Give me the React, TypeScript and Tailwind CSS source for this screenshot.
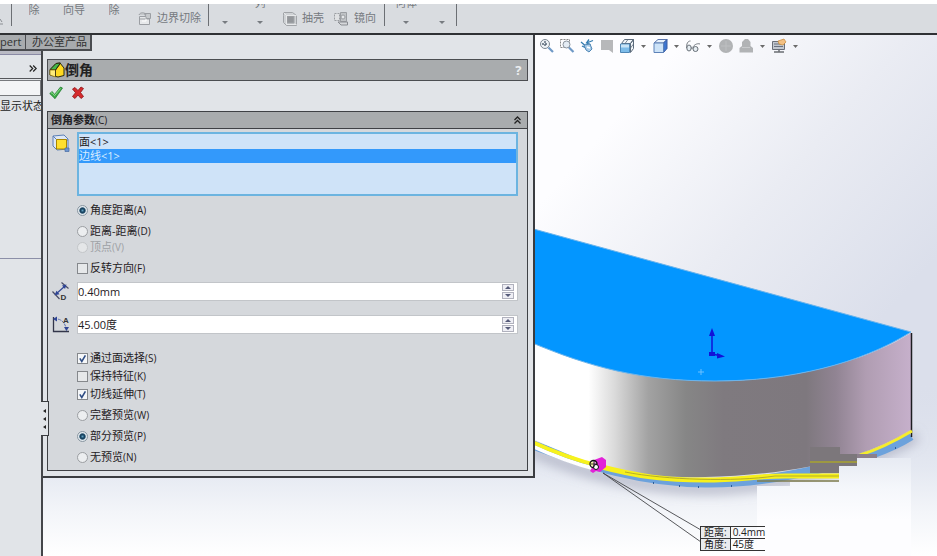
import React from 'react';

const CaretDown: React.FC = () => (
  <svg width="6" height="3" viewBox="0 0 6 3" aria-hidden="true">
    <path d="M0 0h6L3 3z" fill="#777b80" />
  </svg>
);

const Radio: React.FC<{ name: string; label: string; hotkey: string; checked?: boolean; disabled?: boolean }> = ({
  name,
  label,
  hotkey,
  checked,
  disabled,
}) => (
  <label className={`flex h-4 items-center gap-0.5 ${disabled ? 'text-[#9ea1a5]' : ''}`}>
    <input
      type="radio"
      name={name}
      defaultChecked={checked}
      disabled={disabled}
      className="size-[11px] appearance-none rounded-full border border-[#9b9ea2] bg-[#eceef0] checked:border-[#8795a0] checked:bg-[radial-gradient(circle,#5f9fc0_0,#153f5c_30%,#1d4a68_42%,#e4eaef_58%)] disabled:border-[#c3c6c9] disabled:bg-[#e4e6e8]"
    />
    <span className="whitespace-nowrap">
      {label}
      <span className="text-[10px]">({hotkey})</span>
    </span>
  </label>
);

const Check: React.FC<{ label: string; hotkey: string; checked?: boolean }> = ({ label, hotkey, checked }) => (
  <label className="flex h-4 items-center gap-0.5">
    <span className="grid size-[11px]">
      <input
        type="checkbox"
        defaultChecked={checked}
        className="peer col-start-1 row-start-1 size-[11px] appearance-none border border-[#85888c] bg-[#e6e8ea] checked:bg-[#f5f7f9]"
      />
      <svg
        viewBox="0 0 11 11"
        className="pointer-events-none invisible col-start-1 row-start-1 size-[11px] peer-checked:visible"
        aria-hidden="true"
      >
        <path d="M2.8 5.4l2 3L8.4 2.4" fill="none" stroke="#2f4d84" strokeWidth="1.6" />
      </svg>
    </span>
    <span className="whitespace-nowrap">
      {label}
      <span className="text-[10px]">({hotkey})</span>
    </span>
  </label>
);

const Spinner: React.FC<{ label: string; value: string; icon: React.ReactNode }> = ({ label, value, icon }) => (
  <div className="flex">
    <span className="w-[29px] shrink-0 pl-1">{icon}</span>
    <div className="flex h-[19px] flex-1 border border-[#c2c5c9] bg-white">
      <input
        type="text"
        aria-label={label}
        defaultValue={value}
        className="min-w-0 flex-1 bg-transparent text-[11px] leading-4 outline-none"
      />
      <div className="flex w-[15px] flex-col justify-center gap-px">
        <button type="button" aria-label={`${label} +`} className="flex h-[7px] w-3 items-center justify-center border border-[#b0b1bd] bg-[#eeeef4]">
          <svg width="6" height="3" viewBox="0 0 6 3"><path d="M3 0l3 3H0z" fill="#555a78" /></svg>
        </button>
        <button type="button" aria-label={`${label} -`} className="flex h-[7px] w-3 items-center justify-center border border-[#b0b1bd] bg-[#eeeef4]">
          <svg width="6" height="3" viewBox="0 0 6 3"><path d="M0 0h6L3 3z" fill="#555a78" /></svg>
        </button>
      </div>
    </div>
  </div>
);

/* Ribbon column with a label that is cut off by the top edge */
const RibbonColumn: React.FC<{ label?: string; arrow?: boolean; low?: boolean; className: string }> = ({
  label,
  arrow,
  low,
  className,
}) => (
  <button type="button" aria-label={label || 'more'} className={`flex h-[22px] flex-col items-center justify-between ${className}`}>
    <span className={`flex items-end overflow-hidden leading-3 ${low ? 'h-[5px]' : 'h-3'}`}>{label}</span>
    {arrow && <span className="flex h-2 items-center"><CaretDown /></span>}
  </button>
);

const Toolbar: React.FC = () => (
  <header className="mt-1 flex h-[31px] overflow-hidden border-b-2 border-[#2f3134] bg-[#d9dce0] text-[11px] text-[#75797e]">
    <div className="flex h-[22px] w-3 shrink-0 items-end border-r border-[#6c6f74]">
      <svg width="5" height="8" viewBox="0 0 5 8"><path d="M0 1l2 3M0 6h3" stroke="#8a8e93" fill="none" /></svg>
    </div>
    <RibbonColumn label="除" className="w-11 shrink-0" />
    <RibbonColumn label="向导" className="w-9 shrink-0" />
    <RibbonColumn label="除" className="w-11 shrink-0" />
    <button type="button" className="flex h-[22px] shrink-0 items-end gap-[5px] border-r border-[#6c6f74] pr-[7px] pl-0.5 leading-4">
      <svg width="14" height="15" viewBox="0 0 14 15" fill="none" stroke="#9b9ea3">
        <path d="M1.5 5.500h10v8h-10zM1.500 8h10" fill="#e6e8ea" />
        <path d="M1 4c1-3 6-3 7 0M6.500 2.500h6v5h-4z" fill="#c6c9cc" />
        <path d="M4 10h4v-2" stroke="#fff" />
      </svg>
      边界切除
    </button>
    <RibbonColumn arrow className="w-8 shrink-0" />
    <RibbonColumn label="列" arrow low className="w-[38px] shrink-0" />
    <button type="button" className="flex h-[22px] shrink-0 items-end gap-[5px] pr-1.5 pl-1 leading-4">
      <svg width="14" height="14" viewBox="0 0 14 14" fill="none" stroke="#a1a4a8">
        <path d="M.5 3.500v-3h9l4 3v10h-10l-3-3z" fill="#cfd2d5" />
        <path d="M4 4h7v7H4z" fill="#94979b" />
        <path d="M.5.500l3 3v9h10M3.500 3.500h10" stroke="#e6e8ea" />
      </svg>
      抽壳
    </button>
    <button type="button" className="flex h-[22px] shrink-0 items-end gap-1.5 border-r border-[#6c6f74] pr-2 pl-1 leading-4">
      <svg width="14" height="14" viewBox="0 0 14 14" fill="none" stroke="#9b9ea2">
        <path d="M.5 1.500h5v7h-5z" fill="#dfe1e3" strokeDasharray="2 1" />
        <path d="M6.500.500h6v9h-6z" fill="#c0c3c6" />
        <circle cx="9" cy="5" r="2" fill="#e6e8ea" />
        <path d="M4 10l3 3h6.500v-3z" fill="#d5d7da" stroke="#888b90" />
      </svg>
      镜向
    </button>
    <RibbonColumn label="何体" arrow low className="w-[42px] shrink-0" />
    <RibbonColumn arrow className="w-[30px] shrink-0 border-r border-[#6c6f74]" />
  </header>
);

const FaceIcon: React.FC = () => (
  <svg width="18" height="18" viewBox="0 0 18 18">
    <path d="M1 2l11-1 4 4v10l-11 1-4-4z" fill="#dfe8f4" stroke="#5a7fb8" />
    <path d="M1 2l4 4h11M5 6v9" stroke="#5a7fb8" fill="none" />
    <path d="M4.500 5.500h10v9.500h-10z" fill="#ffe02e" stroke="#a98700" />
    <path d="M13 14h4v3.500h-4z" fill="#6f97d0" stroke="#466ba4" strokeWidth=".7" />
  </svg>
);

const DistanceIcon: React.FC = () => (
  <svg width="18" height="19" viewBox="0 0 18 19" fill="none">
    <path d="M9.500.500l7 6M.5 9.500l7 7.500" stroke="#4a4d66" strokeWidth="1.200" />
    <path d="M4 12l9-8" stroke="#2f4596" strokeWidth="1.200" />
    <path d="M2.500 13.300l2-4.500 3 3.500zM14.500 2.500l-4.500 1 3 3.500z" fill="#2f4596" />
    <text x="8.500" y="18" fontSize="8" fontWeight="bold" fontFamily="Liberation Sans, sans-serif" fill="#333">D</text>
  </svg>
);

const AngleIcon: React.FC = () => (
  <svg width="18" height="19" viewBox="0 0 18 19" fill="none">
    <path d="M1.500 2v14.500H17" stroke="#33364a" strokeWidth="1.300" />
    <path d="M2 4c7-1 12 4 12.500 12" stroke="#5b6fb0" strokeDasharray="3 1" />
    <path d="M1 4l4-2.500v5zM14.500 16l-2.500-4h5z" fill="#2f4596" />
    <text x="11" y="8" fontSize="8" fontWeight="bold" fontFamily="Liberation Sans, sans-serif" fill="#333">A</text>
  </svg>
);

const ChamferPanel: React.FC = () => (
  <form className="relative min-w-0 flex-1 self-start border-r-2 border-b-2 border-[#3a3c40] bg-[#e1e4e8] pt-2 pr-[5px] pb-[5px] pl-1">
    <div className="flex h-[22px] items-center border border-[#4b4d51] bg-[#a9acae] pr-1.5 pl-px">
      <svg width="16" height="16" viewBox="0 0 16 16" stroke="#2b2a10" strokeLinejoin="round">
        <path d="M1 8l6-6.500 4-.5 4 5v7.500l-6 1.500-8-2z" fill="#ffd91f" />
        <path d="M1 7.500L7 1.500l4.500-.5L6.500 8z" fill="#43b749" />
        <path d="M1 8l5.500 0v7L1 13z" fill="#ffec7a" stroke="#8b7310" strokeWidth=".7" />
        <path d="M11.500 1L6.500 8v6.500" fill="none" strokeWidth=".8" />
      </svg>
      <h1 className="flex-1 text-[14px] leading-5 font-bold text-[#222]">倒角</h1>
      <button type="button" aria-label="help" className="text-[13px] leading-4 font-bold text-[#eceef0]">?</button>
    </div>

    <div className="flex h-[30px] items-start gap-2 pt-[5px] pl-0.5">
      <button type="button" aria-label="OK">
        <svg width="14" height="14" viewBox="0 0 14 14">
          <path d="M.7 7.500l2.500-2 2.300 3L11.500 1l2 1L6 12.700z" fill="#39a945" stroke="#1d7a2c" strokeWidth=".7" />
          <path d="M2 7.300l1-.7 2.500 3L11.500 2.500" fill="none" stroke="#8fdc8c" />
        </svg>
      </button>
      <button type="button" aria-label="Cancel">
        <svg width="14" height="14" viewBox="0 0 14 14">
          <path d="M1.500 3l2.500-1.500 3 3 3-3.500 2.500 1.500-3 4 3 4-2.500 2-3-3.500-3 3.500-2.500-2 3-3.800z" fill="#d52a2c" stroke="#8d1215" strokeWidth=".8" />
        </svg>
      </button>
    </div>

    <fieldset className="border border-[#3f4145] bg-[#d5d8dc] text-[11px] text-[#1f2023]">
      <div className="flex h-[17px] items-center justify-between border-b border-[#3f4145] bg-[#a9acae] pr-1.5 pl-[3px]">
        <h2 className="leading-4 font-bold">倒角参数<span className="text-[10px] font-normal">(C)</span></h2>
        <button type="button" aria-label="collapse">
          <svg width="7" height="8" viewBox="0 0 7 8" fill="none" stroke="#222" strokeWidth="1.300">
            <path d="M.5 4l3-3 3 3M.5 7.500l3-3 3 3" />
          </svg>
        </button>
      </div>

      <div className="pt-[3px] pr-[9px] pb-[5px]">
        <div className="flex">
          <span className="w-[29px] shrink-0 pt-0.5 pl-1"><FaceIcon /></span>
          <ul role="listbox" aria-label="倒角参数" className="h-16 flex-1 border-2 border-[#6cb4e0] bg-[#cfe3f8] pt-px">
            <li role="option" aria-selected="false" className="leading-[14px]">面&lt;1&gt;</li>
            <li role="option" aria-selected="true" className="bg-[#3399fb] leading-[14px] text-[#d8ecff]">边线&lt;1&gt;</li>
          </ul>
        </div>

        <div className="pt-1.5 pl-[29px]">
          <div className="pb-[5px]"><Radio name="type" label="角度距离" hotkey="A" checked /></div>
          <Radio name="type" label="距离-距离" hotkey="D" />
          <Radio name="type" label="顶点" hotkey="V" disabled />
          <div className="pt-[5px]"><Check label="反转方向" hotkey="F" /></div>
        </div>

        <div className="flex flex-col gap-3.5 pt-1.5">
          <Spinner label="距离" value="0.40mm" icon={<DistanceIcon />} />
          <Spinner label="角度" value="45.00度" icon={<AngleIcon />} />
        </div>

        <div className="flex flex-col gap-0.5 pt-4 pl-[29px]">
          <Check label="通过面选择" hotkey="S" checked />
          <Check label="保持特征" hotkey="K" />
          <Check label="切线延伸" hotkey="T" checked />
        </div>
        <div className="flex flex-col gap-[5px] pt-[5px] pl-[29px]">
          <Radio name="preview" label="完整预览" hotkey="W" />
          <Radio name="preview" label="部分预览" hotkey="P" checked />
          <Radio name="preview" label="无预览" hotkey="N" />
        </div>
      </div>
    </fieldset>

    {/* Splitter handle sits over the panel edge */}
    <button
      type="button"
      aria-label="splitter"
      className="absolute top-[350px] -left-0.5 flex h-[35px] w-2 flex-col items-center justify-center gap-1 border-y border-r border-[#3a3c40] bg-[#e1e4e8]"
    >
      {[0, 1, 2].map((i) => (
        <svg key={i} width="3" height="4" viewBox="0 0 3 4"><path d="M3 0v4L0 2z" fill="#222" /></svg>
      ))}
    </button>
  </form>
);

const Sidebar: React.FC = () => (
  <aside className="flex w-[43px] shrink-0 flex-col border-r-2 border-[#44464a] bg-[#e1e4e8] text-[11px] text-[#222]">
    <div className="h-1 border-b border-[#8a8aa5] bg-[#b9bac4]" />
    <button type="button" aria-label="expand" className="flex h-6 items-center justify-end border-b border-[#55575b] pt-1 pr-1">
      <svg width="8" height="7" viewBox="0 0 8 7" fill="none" stroke="#222" strokeWidth="1.200">
        <path d="M.7.500l3 3-3 3M4.200.500l3 3-3 3" />
      </svg>
    </button>
    <input type="text" aria-label="filter" className="mt-px h-4 w-full border border-l-0 border-[#77797d] bg-[#f3f4f6]" />
    <span className="mt-0.5 overflow-hidden leading-4 whitespace-nowrap">显示状态</span>
    <div className="h-[145px] shrink-0 border-b border-[#8c8fa8]" />
  </aside>
);

const Arrow: React.FC = () => (
  <button type="button" aria-label="options" className="flex w-[13px] items-center justify-center">
    <svg width="5" height="3" viewBox="0 0 5 3"><path d="M0 0h5L2.500 3z" fill="#6a6a6a" /></svg>
  </button>
);

const ViewIcon: React.FC<{ label: string; children: React.ReactNode }> = ({ label, children }) => (
  <button type="button" aria-label={label} className="flex w-5 items-center justify-center">
    <svg width="16" height="16" viewBox="0 0 16 16" fill="none">{children}</svg>
  </button>
);

const ViewToolbar: React.FC = () => (
  <div className="flex pt-[3px] pl-0.5">
    <div className="flex h-4">
      <ViewIcon label="zoom to fit">
        <circle cx="6" cy="6" r="4.500" fill="#eef2f6" stroke="#7c8792" />
        <path d="M6 3v6M3 6h6" stroke="#566575" strokeWidth="1.400" strokeDasharray="2 1" />
        <path d="M9.500 9.500l4.500 4.500" stroke="#6f99c6" strokeWidth="2.200" />
      </ViewIcon>
      <ViewIcon label="zoom to area">
        <path d="M1.500 1.500h9v8h-9z" stroke="#888" strokeDasharray="2 1" />
        <circle cx="7.500" cy="6.500" r="3.500" fill="#e4ecf4" stroke="#8a939d" />
        <path d="M10 9.500l4.500 4.500" stroke="#6f99c6" strokeWidth="2.200" />
      </ViewIcon>
      <ViewIcon label="previous view">
        <path d="M2 4l7 6M3 8l8 4" stroke="#347cb0" strokeWidth="1.300" />
        <path d="M7.500 5l6.500-2.500M10 1.500L7.500 5l4 1.500" stroke="#347cb0" strokeWidth="1.300" />
        <path d="M5 7l6-1 2 5-3 3-3-2z" fill="#a9cbe8" stroke="#5087b5" />
        <path d="M8 9l3 1" stroke="#fff" strokeWidth="1.500" />
      </ViewIcon>
      <ViewIcon label="section view">
        <path d="M2 2h12v13l-4-3H2z" fill="#b7b8ba" />
      </ViewIcon>
      <ViewIcon label="view orientation">
        <path d="M5.500 1.500h9l-3 4h-9zM11.500 5.500l3-4v9l-3 4z" fill="#f2f6fa" stroke="#5c6b7b" />
        <path d="M1.500 6h9v8.500h-9z" fill="#7dbce9" stroke="#4f87b6" />
        <path d="M9 1.500L6 5.500M11.500 10l3-4" stroke="#5c6b7b" strokeWidth=".8" />
        <path d="M2 6.500h8v3H2z" fill="#c9e4f7" />
      </ViewIcon>
      <Arrow />
      <ViewIcon label="display style">
        <path d="M2 5l4-3.500h9L11.500 5z" fill="#e8f2fc" stroke="#5b76ac" />
        <path d="M11.500 5L15 1.500v9L11.500 14.500z" fill="#3d76d0" stroke="#3a5ca4" />
        <path d="M2 5h9.500v9.500H2z" fill="#cde3f8" stroke="#5d82b8" />
      </ViewIcon>
      <Arrow />
      <ViewIcon label="hide/show items">
        <path d="M1.500 10c0-4 1-7 4-7M8 9c1-2 4-4 7-3" stroke="#777d84" />
        <ellipse cx="4" cy="10" rx="2.200" ry="3" fill="#e6edf2" stroke="#666e76" />
        <ellipse cx="10.500" cy="11" rx="2.500" ry="2.500" fill="#e6edf2" stroke="#666e76" />
        <path d="M6 10l2 0" stroke="#666e76" />
      </ViewIcon>
      <Arrow />
      <ViewIcon label="edit appearance">
        <circle cx="8" cy="8" r="7" fill="#b1b3b5" />
        <path d="M8 3v10M3 8h10" stroke="#bdbfc1" />
      </ViewIcon>
      <ViewIcon label="apply scene">
        <path d="M1.500 14.500V10L4 8V4l3-3h3l2.500 3v4l2.500 2v4.500z" fill="#b1b3b5" />
        <path d="M4 9.500h8" stroke="#c8cacc" />
      </ViewIcon>
      <Arrow />
      <ViewIcon label="view settings">
        <path d="M1.500 3.500h12v8h-12z" fill="#c3c8d0" stroke="#6a6f78" />
        <path d="M3 6h7M3 8.500h9" stroke="#6a7280" />
        <path d="M7 3l6-2 2 3-3 3-4-1z" fill="#f3c083" stroke="#c68836" strokeWidth=".7" />
        <path d="M3 14h10M8 12v2" stroke="#6a6d73" strokeWidth="1.500" />
      </ViewIcon>
      <Arrow />
    </div>
  </div>
);

/* 3D model view, drawn behind the panels */
const Model: React.FC = () => (
  <svg
    className="absolute inset-0 -z-10 h-full w-full"
    viewBox="0 35 937 521"
    preserveAspectRatio="xMinYMin slice"
    fill="none"
    aria-hidden="true"
  >
    <defs>
      <linearGradient id="sky" gradientUnits="userSpaceOnUse" x1="640" y1="90" x2="890" y2="310">
        <stop offset="0" stopColor="#fdfdff" />
        <stop offset=".5" stopColor="#eaecf3" />
        <stop offset="1" stopColor="#dbdfeb" />
      </linearGradient>
      <linearGradient id="ground" gradientUnits="userSpaceOnUse" x1="0" y1="380" x2="0" y2="556">
        <stop offset="0" stopColor="#dbdfeb" stopOpacity="0" />
        <stop offset=".5" stopColor="#e4e8f1" />
        <stop offset=".75" stopColor="#f3f5f9" />
        <stop offset="1" stopColor="#fff" />
      </linearGradient>
      <linearGradient id="wall" gradientUnits="userSpaceOnUse" x1="536" y1="0" x2="911" y2="0">
        <stop offset="0" stopColor="#fff" />
        <stop offset=".14" stopColor="#fff" />
        <stop offset=".21" stopColor="#dadada" />
        <stop offset=".3" stopColor="#a2a2a2" />
        <stop offset=".4" stopColor="#868686" />
        <stop offset=".5" stopColor="#7f7a7f" />
        <stop offset=".72" stopColor="#7e787e" />
        <stop offset=".8" stopColor="#918493" />
        <stop offset=".88" stopColor="#b09db2" />
        <stop offset="1" stopColor="#c6b0cb" />
      </linearGradient>
      <linearGradient id="patch" gradientUnits="userSpaceOnUse" x1="0" y1="458" x2="0" y2="520">
        <stop offset="0" stopColor="#e7ebf3" />
        <stop offset=".5" stopColor="#f5f7fb" />
        <stop offset="1" stopColor="#fdfdff" />
      </linearGradient>
      <filter id="soft" x="-10%" y="-50%" width="120%" height="200%">
        <feGaussianBlur stdDeviation="6" />
      </filter>
    </defs>
    <rect y="35" width="937" height="521" fill="url(#sky)" />
    <rect y="380" width="937" height="176" fill="url(#ground)" />
    <path d="M530 450C590 477 645 488 705 489S870 465 916 436" stroke="#8f93a8" strokeOpacity=".6" strokeWidth="10" filter="url(#soft)" />

    <path d="M530 444C590 466 640 482 705 483S870 462 911 436" stroke="#6ca2dc" strokeWidth="9" />
    <path d="M530 342C590 367 645 381 715 381S860 365 911 333V430C870 456 800 475 705 477S590 463 530 438z" fill="url(#wall)" />
    <path d="M530 228L911 332C860 364 790 381 715 381S590 367 530 342z" fill="#0396ff" />
    <path d="M530 228L911 332C860 364 790 381 715 381S590 367 530 342" stroke="#6bb4ec" />
    <path d="M911.500 333v104" stroke="#1c1c20" strokeWidth="1.500" />

    <path d="M530 445C556 457 575 464 596 469" stroke="#fff" strokeWidth="4" />
    <path d="M530 441C556 453 575 460 600 466" stroke="#f7f21c" strokeWidth="4" />
    <path d="M598 466C640 477 665 480 705 480C740 480 755 476 785 476H839" stroke="#f7f01c" strokeWidth="5" />
    <path d="M625 472C665 480 735 482 775 476H839" stroke="#a59d2c" strokeWidth=".8" />
    <path d="M757 481H839" stroke="#7f7c4c" strokeWidth="1.500" />
    <path d="M912 431C895 441 880 449 860 455" stroke="#f6ec2c" strokeWidth="3" />
    <path d="M653 483h1M679 486h1M698 487h1M731 486h1M895 448h1" stroke="#2b5d9a" strokeWidth="2" />

    <path d="M839 454h38v4h-38z" fill="#8c808c" />
    <path d="M810 447h30v7h17v12h-18v7h-29z" fill="#7c777b" />
    <path d="M810 462h47" stroke="#a8a32f" strokeWidth="1.500" />
    <path d="M857 458H911V556H757V486H790V482H839V466H857z" fill="url(#patch)" />

    <path d="M712 352v-17M712 354l10 2" stroke="#1212d8" strokeWidth="1.500" />
    <path d="M709 336l3-8 3 8zM717 353l8 3.500-8 2zM709 352h6v4h-6z" fill="#1212d8" />
    <path d="M701 369v6M698 372h6" stroke="#6cc0ff" />

    <path d="M603 473L701 530M603 473L701 542" stroke="#45464a" strokeWidth=".9" />
    <path d="M594 460l8-3 4 3v7l-6 5-4-1-3 2-3-2 3-5z" fill="#e222d8" />
    <circle cx="593.500" cy="464" r="3.500" stroke="#111" strokeWidth="1.300" fill="#fff" fillOpacity=".6" />
    <circle cx="596" cy="467" r="2.500" stroke="#111" fill="#fff" />
    <path d="M591 464h6M594 461v6" stroke="#111" strokeWidth=".8" />
  </svg>
);

const App: React.FC = () => (
  <div className="flex min-h-screen flex-col overflow-hidden bg-white font-['Open_Sans','Noto_Sans_CJK_SC',sans-serif]">
    <Toolbar />
    <main className="relative isolate flex flex-1">
      <Model />
      <div className="flex w-4/7 flex-col">
        <nav className="flex h-4 border-r-2 border-[#3a3c40] bg-[#e1e4e8] text-[11px] leading-[13px] text-[#333]">
          <a href="#expert" className="w-[26px] overflow-hidden border-r border-b-2 border-[#4a4c50] bg-[#a8abae] whitespace-nowrap">pert</a>
          <a href="#office" className="border-r-2 border-b-2 border-[#4a4c50] bg-[#a8abae] pr-[3px] pl-1.5 whitespace-nowrap">办公室产品</a>
        </nav>
        <div className="flex flex-1">
          <Sidebar />
          <ChamferPanel />
        </div>
      </div>
      <ViewToolbar />

      <table className="absolute top-[491px] left-[700px] border-collapse text-[10px] leading-[11px] text-[#222]">
        <tbody>
          <tr>
            <th scope="row" className="border border-[#333] bg-[#e9ebee] px-[3px] text-left font-normal whitespace-nowrap">距离:</th>
            <td className="border-y border-[#333] pl-0.5 whitespace-nowrap">0.4mm</td>
          </tr>
          <tr>
            <th scope="row" className="border border-[#333] bg-[#e9ebee] px-[3px] text-left font-normal whitespace-nowrap">角度:</th>
            <td className="border-y border-[#333] pl-0.5 whitespace-nowrap">45度</td>
          </tr>
        </tbody>
      </table>
    </main>
  </div>
);

export default App;
